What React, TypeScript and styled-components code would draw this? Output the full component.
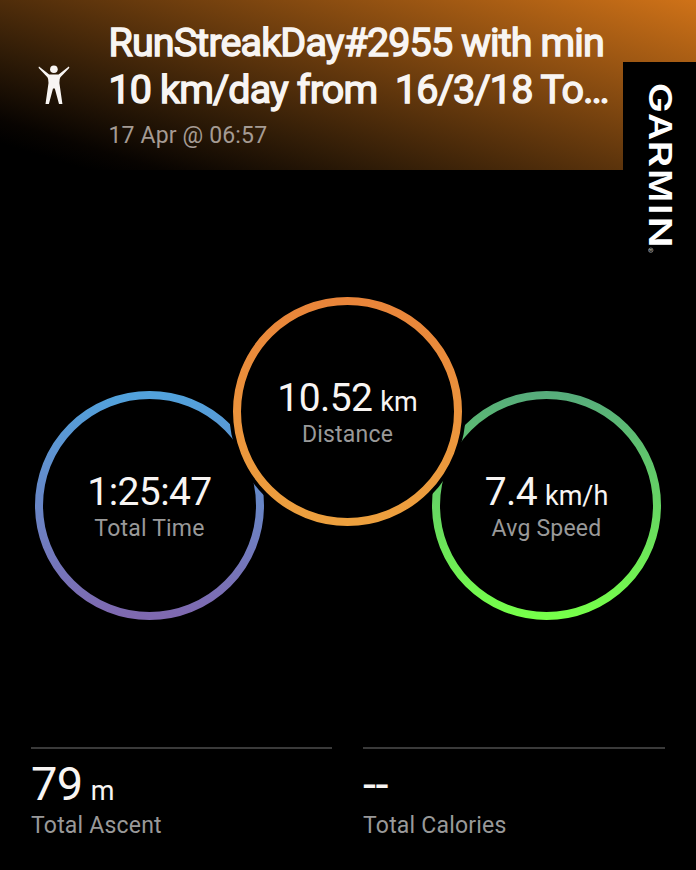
import React from "react";
import styled, { createGlobalStyle } from "styled-components";

const GlobalStyle = createGlobalStyle`
  * { box-sizing: border-box; }
  body { margin: 0; background: #000; }
`;

const Page = styled.main`
  width: 696px;
  height: 870px;
  display: flex;
  flex-direction: column;
  overflow: hidden;
  background: #000;
  color: #f8f5f3;
  font-family: Roboto, sans-serif;
`;

const Header = styled.header`
  position: relative;
  height: 170px;
  flex: none;
  display: flex;
  background: linear-gradient(17deg, #000 7%, #080401 13%, #301c07 31%, #cf7218 100%);
`;

const ActivityIcon = styled.svg`
  flex: none;
  width: 32px;
  height: 42px;
  margin: 64px 38.5px 0 38px;
`;

const Heading = styled.div`
  padding-top: 19px;
`;

const Title = styled.h1`
  margin: 0;
  font-size: 39.5px;
  line-height: 47px;
  font-weight: 400;
  letter-spacing: -0.88px;
  white-space: pre;
  -webkit-text-stroke: 1.4px currentColor;
`;

const DateLine = styled.p`
  margin: 8px 0 0;
  font-size: 23px;
  line-height: 30px;
  letter-spacing: 0.15px;
  color: #a59b94;
`;

const BrandTag = styled.aside`
  position: absolute;
  top: 62px;
  right: 0;
  width: 73px;
  height: 208px;
  background: #000;
`;

const Dials = styled.section`
  display: flex;
  align-items: flex-end;
  height: 323px;
  margin: 127px 0 0 35px;
`;

const DialBox = styled.div<{ $raised?: boolean }>`
  position: relative;
  z-index: ${(p) => (p.$raised ? 1 : 0)};
  flex: none;
  width: 229px;
  height: 229px;
  align-self: ${(p) => (p.$raised ? "flex-start" : "flex-end")};
  margin: ${(p) => (p.$raised ? "0 -30px 0 -31px" : "0")};
  display: grid;
  & > * { grid-area: 1 / 1; }
`;

const Ring = styled.svg`
  width: 229px;
  height: 229px;
  overflow: visible;
`;

const DialText = styled.div`
  z-index: 1;
  padding-top: 78px;
  text-align: center;
`;

const Value = styled.div<{ $size: number; $line: number }>`
  height: ${(p) => p.$line}px;
  font-size: ${(p) => p.$size}px;
  line-height: ${(p) => p.$line}px;
  letter-spacing: -0.6px;
  white-space: nowrap;
`;

const Unit = styled.span`
  margin-left: 8px;
  font-size: 27px;
  line-height: 1;
  letter-spacing: 0;
`;

const Label = styled.div<{ $offset: number }>`
  margin-top: ${(p) => p.$offset}px;
  font-size: 23px;
  line-height: 28px;
  letter-spacing: 0.2px;
  color: #999;
`;

const Stats = styled.section`
  display: grid;
  grid-template-columns: 301px 302px;
  column-gap: 31px;
  margin: 127px 0 0 31px;
`;

const Stat = styled.div`
  border-top: 2px solid #3a3a3a;
  padding-top: 8px;
`;

interface DialProps {
  id: string;
  value: string;
  unit?: string;
  label: string;
  from: string;
  to: string;
  raised?: boolean;
}

function Dial({ id, value, unit, label, from, to, raised }: DialProps) {
  return (
    <DialBox $raised={raised}>
      <Ring viewBox="0 0 229 229">
        <defs>
          <linearGradient id={id} x1="0" y1="0" x2="0" y2="1">
            <stop offset="0" stopColor={from} />
            <stop offset="1" stopColor={to} />
          </linearGradient>
        </defs>
        {raised && <circle cx="114.5" cy="114.5" r="118.3" fill="#000" />}
        <circle cx="114.5" cy="114.5" r="110.5" fill="none" stroke={`url(#${id})`} strokeWidth="8" />
      </Ring>
      <DialText>
        <Value $size={39} $line={46}>
          {value}
          {unit && <Unit>{unit}</Unit>}
        </Value>
        <Label $offset={0}>{label}</Label>
      </DialText>
    </DialBox>
  );
}

function Person() {
  return (
    <ActivityIcon viewBox="38 64 32 42" fill="#f8f5f3">
      <circle cx="53.9" cy="69.3" r="3.8" />
      <path d="M39 66.4 L49.2 74.4 H58.6 L68.8 66.4 Q69.8 67.2 69 68.2 L60.4 77.2 Q59.2 78.8 59.4 83 L62.4 104 H59 L54.8 88.4 H53 L48.9 104 H45.5 L48.5 83 Q48.7 78.8 47.4 77.2 L38.9 68.2 Q38.2 67.2 39 66.4Z" />
    </ActivityIcon>
  );
}

// Each letter: glyph, start along the wordmark, advance width.
const brandLetters: [string, number, number][] = [
  ["G", 20.8, 30.2],
  ["A", 50.9, 27.2],
  ["R", 78.5, 26.7],
  ["M", 107.2, 32.9],
  ["I", 142.1, 10.5],
  ["N", 154.5, 31.3],
];

function Brand() {
  return (
    <BrandTag>
      <svg width="73" height="208" viewBox="0 0 73 208" fill="#fff" fontFamily="Inter, sans-serif">
        {brandLetters.map(([ch, y, len]) => (
          <text
            key={ch}
            transform={`translate(25.8 ${y}) rotate(90)`}
            fontSize="31.5"
            fontWeight="600"
            textLength={len}
            lengthAdjust="spacingAndGlyphs"
          >
            {ch}
          </text>
        ))}
        <circle cx="27.8" cy="188.2" r="2.2" fill="none" stroke="#bbb" strokeWidth="0.6" />
        <text transform="translate(26.4 186.9) rotate(90)" fontSize="4" fill="#ccc">R</text>
      </svg>
    </BrandTag>
  );
}

export default function App() {
  return (
    <Page>
      <GlobalStyle />
      <Header>
        <Person />
        <Heading>
          <Title>{"RunStreakDay#2955 with min\n10 km/day from  16/3/18 To…"}</Title>
          <DateLine>17 Apr @ 06:57</DateLine>
        </Heading>
        <Brand />
      </Header>
      <Dials>
        <Dial id="time" value="1:25:47" label="Total Time" from="#52a2dc" to="#7f69b0" />
        <Dial id="distance" value="10.52" unit="km" label="Distance" from="#e9853a" to="#eda03e" raised />
        <Dial id="speed" value="7.4" unit="km/h" label="Avg Speed" from="#57ad7b" to="#76ff4a" />
      </Dials>
      <Stats>
        <Stat>
          <Value $size={47} $line={54}>
            79<Unit>m</Unit>
          </Value>
          <Label $offset={1}>Total Ascent</Label>
        </Stat>
        <Stat>
          <Value $size={47} $line={54}>--</Value>
          <Label $offset={1}>Total Calories</Label>
        </Stat>
      </Stats>
    </Page>
  );
}
